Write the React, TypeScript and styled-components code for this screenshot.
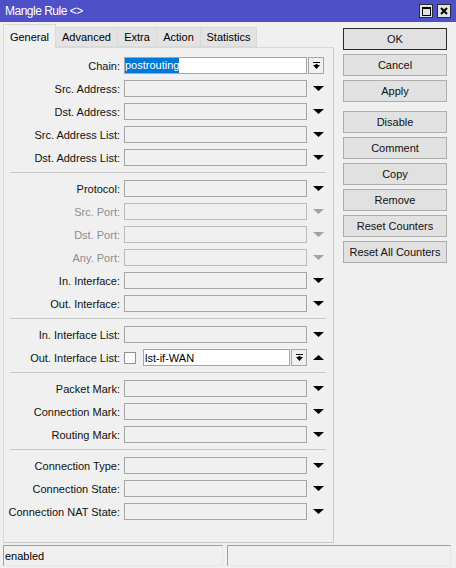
import React from "react";
import styled, { createGlobalStyle } from "styled-components";

const GlobalStyle = createGlobalStyle`
  html, body { margin: 0; padding: 0; background: #f0f0f0; }
  body { font-family: "Liberation Sans", Arial, sans-serif; font-size: 11px; color: #000; }
  * { box-sizing: border-box; }
`;

const Window = styled.div`
  width: 456px;
  height: 568px;
  display: flex;
  flex-direction: column;
  background: #f0f0f0;
  overflow: hidden;
`;

const TitleBar = styled.div`
  height: 22px;
  flex: none;
  background: #4d50c6;
  display: flex;
  align-items: center;
  justify-content: space-between;
  padding: 0 5px;
  color: #fff;
  font-size: 12px;
  letter-spacing: -0.5px;
`;

const TitleButtons = styled.div`
  display: flex;
  gap: 4px;
`;

const TitleButton = styled.div`
  width: 14px;
  height: 14px;
  background: #e4e4e4;
  border: 1px solid #2c2c2c;
  display: flex;
  align-items: center;
  justify-content: center;
`;

const Body = styled.div`
  display: flex;
  height: 523px;
  padding: 2px 0 0 3px;
`;

const LeftCol = styled.div`
  width: 331px;
  display: flex;
  flex-direction: column;
  padding-bottom: 2px;
`;

const TabBar = styled.div`
  height: 23px;
  display: flex;
  align-items: flex-end;
  position: relative;
  z-index: 1;
`;

const Tab = styled.div<{ $active?: boolean; $w: number }>`
  width: ${(p) => p.$w}px;
  height: ${(p) => (p.$active ? 24 : 20)}px;
  margin-bottom: ${(p) => (p.$active ? -1 : 0)}px;
  display: flex;
  align-items: center;
  justify-content: center;
  white-space: nowrap;
  background: ${(p) => (p.$active ? "#f0f0f0" : "#e3e3e3")};
  border: 1px solid #d9d9d9;
  border-bottom: ${(p) => (p.$active ? "none" : "1px solid #d9d9d9")};
  margin-left: -1px;
  &:first-child { margin-left: 0; }
  color: #000;
`;

const Panel = styled.div`
  flex: 1;
  border: 1px solid #d9d9d9;
  border-right-color: #c9c9c9;
  border-bottom-color: #c9c9c9;
  background: #f0f0f0;
  padding-top: 6px;
  display: flex;
  flex-direction: column;
`;

const Row = styled.div`
  display: grid;
  grid-template-columns: 120px 183px 22px;
  height: 23px;
  align-items: center;
`;

const Label = styled.div<{ $disabled?: boolean }>`
  text-align: right;
  padding-right: 4px;
  white-space: nowrap;
  color: ${(p) => (p.$disabled ? "#8d8d8d" : "#111")};
`;

const Field = styled.div`
  display: flex;
  align-items: center;
  height: 17px;
`;

const Input = styled.div<{ $white?: boolean; $disabled?: boolean }>`
  flex: 1;
  height: 17px;
  border: 1px solid ${(p) => (p.$disabled ? "#bcbcbc" : "#a6a6a6")};
  background: ${(p) => (p.$white ? "#fff" : "#f0f0f0")};
  display: flex;
  align-items: center;
  padding: 0 0 0 ${(p) => (p.$white ? 0 : 2)}px;
  overflow: hidden;
  white-space: nowrap;
`;

const Selected = styled.span`
  display: inline-block;
  height: 15px;
  line-height: 15px;
  background: #0078d7;
  color: #fff;
`;

const PlainText = styled.span`
  padding-left: 1px;
`;

const ComboButton = styled.div`
  width: 16px;
  height: 17px;
  margin-left: 1px;
  border: 1px solid #a6a6a6;
  background: #f0f0f0;
  display: flex;
  align-items: center;
  justify-content: center;
  flex: none;
`;

const CheckBox = styled.div`
  width: 12px;
  height: 12px;
  border: 1px solid #8f8f8f;
  background: #fdfdfd;
  margin-right: 7px;
  flex: none;
`;

const ExtraCell = styled.div`
  display: flex;
  align-items: center;
  justify-content: center;
  height: 17px;
`;

const ComboWrap = styled.div`
  display: flex;
  align-items: center;
  justify-content: flex-start;
  height: 17px;
`;

const Separator = styled.div`
  height: 1px;
  margin: 3px 7px 4px 6px;
  background: #c8c8c8;
`;

const RightCol = styled.div`
  width: 104px;
  margin-left: 9px;
  padding-top: 4px;
  display: flex;
  flex-direction: column;
  gap: 4px;
`;

const Button = styled.div<{ $default?: boolean; $groupStart?: boolean }>`
  height: 22px;
  border: 1px solid ${(p) => (p.$default ? "#2a2a2a" : "#adadad")};
  background: #e1e1e1;
  display: flex;
  align-items: center;
  justify-content: center;
  margin-top: ${(p) => (p.$groupStart ? 5 : 0)}px;
  white-space: nowrap;
  color: #111;
`;

const StatusBar = styled.div`
  height: 23px;
  display: flex;
  gap: 4px;
  padding: 0 5px 2px 3px;
`;

const StatusBox = styled.div<{ $w?: number }>`
  height: 21px;
  flex: ${(p) => (p.$w ? `0 0 ${p.$w}px` : "1")};
  border: 1px solid #a0a0a0;
  border-right-color: #e6e6e6;
  border-bottom-color: #e6e6e6;
  display: flex;
  align-items: center;
  padding-left: 1px;
`;

const Down = ({ color = "#000" }: { color?: string }) => (
  <svg width="11" height="5" viewBox="0 0 11 5">
    <polygon points="0,0 11,0 5.5,5" fill={color} />
  </svg>
);

const Up = () => (
  <svg width="11" height="5" viewBox="0 0 11 5">
    <polygon points="0,5 11,5 5.5,0" fill="#000" />
  </svg>
);

const ComboIcon = () => (
  <svg width="7" height="7" viewBox="0 0 7 7">
    <rect x="0" y="0" width="7" height="1" fill="#000" />
    <rect x="2.5" y="2" width="2" height="1" fill="#000" />
    <polygon points="0,3 7,3 3.5,7" fill="#000" />
  </svg>
);

type FieldRow = { label: string; disabled?: boolean };

const sections: FieldRow[][] = [
  [
    { label: "Src. Address:" },
    { label: "Dst. Address:" },
    { label: "Src. Address List:" },
    { label: "Dst. Address List:" },
  ],
  [
    { label: "Protocol:" },
    { label: "Src. Port:", disabled: true },
    { label: "Dst. Port:", disabled: true },
    { label: "Any. Port:", disabled: true },
    { label: "In. Interface:" },
    { label: "Out. Interface:" },
  ],
  [{ label: "In. Interface List:" }],
  [{ label: "Packet Mark:" }, { label: "Connection Mark:" }, { label: "Routing Mark:" }],
  [{ label: "Connection Type:" }, { label: "Connection State:" }, { label: "Connection NAT State:" }],
];

const tabs = [
  { t: "General", w: 53, a: true },
  { t: "Advanced", w: 63 },
  { t: "Extra", w: 40 },
  { t: "Action", w: 45 },
  { t: "Statistics", w: 57 },
];

const SimpleRow = ({ label, disabled }: FieldRow) => (
  <Row>
    <Label $disabled={disabled}>{label}</Label>
    <Field>
      <Input $disabled={disabled} />
    </Field>
    <ExtraCell>
      <Down color={disabled ? "#a3a3a3" : "#000"} />
    </ExtraCell>
  </Row>
);

const buttons = [
  { t: "OK", d: true },
  { t: "Cancel" },
  { t: "Apply" },
  { t: "Disable", g: true },
  { t: "Comment" },
  { t: "Copy" },
  { t: "Remove" },
  { t: "Reset Counters" },
  { t: "Reset All Counters" },
];

export default function App() {
  return (
    <Window>
      <GlobalStyle />
      <TitleBar>
        <span>Mangle Rule &lt;&gt;</span>
        <TitleButtons>
          <TitleButton>
            <svg width="9" height="9" viewBox="0 0 9 9">
              <rect x="0.5" y="0.5" width="8" height="8" fill="none" stroke="#000" />
              <rect x="0" y="0" width="9" height="2" fill="#000" />
            </svg>
          </TitleButton>
          <TitleButton>
            <svg width="8" height="8" viewBox="0 0 8 8">
              <path d="M1 1 L7 7 M7 1 L1 7" stroke="#000" strokeWidth="2" />
            </svg>
          </TitleButton>
        </TitleButtons>
      </TitleBar>
      <Body>
        <LeftCol>
          <TabBar>
            {tabs.map((t) => (
              <Tab key={t.t} $active={t.a} $w={t.w}>
                {t.t}
              </Tab>
            ))}
          </TabBar>
          <Panel>
            <Row>
              <Label>Chain:</Label>
              <Field>
                <Input $white>
                  <Selected>postrouting</Selected>
                </Input>
              </Field>
              <ComboWrap>
                <ComboButton>
                  <ComboIcon />
                </ComboButton>
              </ComboWrap>
            </Row>
            {sections[0].map((r) => (
              <SimpleRow key={r.label} {...r} />
            ))}
            <Separator />
            {sections[1].map((r) => (
              <SimpleRow key={r.label} {...r} />
            ))}
            <Separator />
            {sections[2].map((r) => (
              <SimpleRow key={r.label} {...r} />
            ))}
            <Row>
              <Label>Out. Interface List:</Label>
              <Field>
                <CheckBox />
                <Input $white>
                  <PlainText>lst-if-WAN</PlainText>
                </Input>
                <ComboButton>
                  <ComboIcon />
                </ComboButton>
              </Field>
              <ExtraCell>
                <Up />
              </ExtraCell>
            </Row>
            <Separator />
            {sections[3].map((r) => (
              <SimpleRow key={r.label} {...r} />
            ))}
            <Separator />
            {sections[4].map((r) => (
              <SimpleRow key={r.label} {...r} />
            ))}
          </Panel>
        </LeftCol>
        <RightCol>
          {buttons.map((b) => (
            <Button key={b.t} $default={b.d} $groupStart={b.g}>
              {b.t}
            </Button>
          ))}
        </RightCol>
      </Body>
      <StatusBar>
        <StatusBox $w={220}>enabled</StatusBox>
        <StatusBox />
      </StatusBar>
    </Window>
  );
}
